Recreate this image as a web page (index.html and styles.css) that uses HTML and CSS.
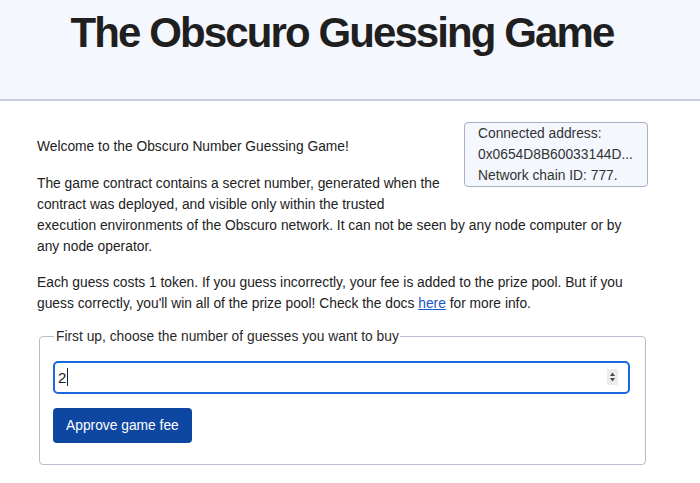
FILE: index.html
```html
<!DOCTYPE html>
<html lang="en">
<head>
<meta charset="utf-8">
<title>The Obscuro Guessing Game</title>
<link rel="stylesheet" href="styles.css">
</head>
<body>
<header class="header">
  <h1 class="title">The Obscuro Guessing Game</h1>
</header>
<main class="main">
  <div class="account">
    <div class="account-line">Connected address:</div>
    <div class="account-line">0x0654D8B60033144D...</div>
    <div class="account-line">Network chain ID: 777.</div>
  </div>
  <p class="text">Welcome to the Obscuro Number Guessing Game!</p>
  <p class="text">The game contract contains a secret number, generated when the contract was deployed, and visible only within the trusted execution environments of the Obscuro network. It can not be seen by any node computer or by any node operator.</p>
  <p class="text">Each guess costs 1 token. If you guess incorrectly, your fee is added to the prize pool. But if you guess correctly, you'll win all of the prize pool! Check the docs <a class="link" href="#">here</a> for more info.</p>
  <fieldset class="panel">
    <legend class="legend">First up, choose the number of guesses you want to buy</legend>
    <div class="field">
      <span class="value">2</span><span class="caret"></span>
      <span class="spinner">
        <svg width="7" height="12" viewBox="0 0 7 12"><path d="M3.5 1.5 L6 5 H1 Z" fill="#4a4a4a"/><path d="M3.5 10.5 L6 7 H1 Z" fill="#4a4a4a"/></svg>
      </span>
    </div>
    <button class="btn" type="button">Approve game fee</button>
  </fieldset>
</main>
</body>
</html>
```
FILE: styles.css
```css
* { box-sizing: border-box; }
html, body { margin: 0; padding: 0; background: #ffffff; }
body {
  font-family: "Liberation Sans", Arial, sans-serif;
  font-size: 13.8px;
  line-height: 21px;
  color: #222222;
}
.header {
  background: #f4f7fe;
  height: 101px;
  border-bottom: 2px solid #c7cad7;
  display: flex;
  justify-content: center;
  padding-right: 16px;
}
.title {
  margin: 0;
  padding-top: 8px;
  font-family: "Liberation Sans", Arial, sans-serif;
  font-weight: 700;
  font-size: 42px;
  line-height: 50px;
  letter-spacing: -1.9px;
  color: #1f1f1f;
}
.main {
  width: 648px;
  padding: 21px 0 0 37px;
}
.account {
  float: right;
  width: 184px;
  margin: 0 0 15px 20px;
  padding: 0 8px 0 13px;
  background: #f4f7fe;
  border: 1px solid #a9aec4;
  border-radius: 4px;
  color: #333333;
}
.account-line { white-space: nowrap; }
.text { margin: 14px 12px 15.5px 0; }
.link { color: #1a55c4; }
.panel {
  clear: both;
  margin: -4px 2px 0;
  padding: 1px 15px 21px 13px;
  border: 1px solid #b9bdcb;
  border-radius: 4px;
}
.legend {
  padding: 0 1px 0 2px;
  margin-left: 1px;
  color: #2a2a2a;
}
.field {
  display: flex;
  align-items: center;
  height: 33px;
  margin-top: 13px;
  padding: 0 10px 0 3px;
  border: 2px solid #1a68de;
  border-radius: 5px;
  font-size: 15px;
}
.value { color: #222; }
.caret {
  width: 1px;
  height: 18px;
  background: #222;
  margin-left: 1px;
}
.spinner {
  margin-left: auto;
  width: 11px;
  height: 16px;
  background: #ececec;
  display: flex;
  align-items: center;
  justify-content: center;
}
.btn {
  display: block;
  margin-top: 14px;
  height: 35px;
  padding: 0 13px;
  background: #0e47a1;
  color: #ffffff;
  border: none;
  border-radius: 4px;
  font-family: "Liberation Sans", Arial, sans-serif;
  font-size: 13.8px;
}
```
